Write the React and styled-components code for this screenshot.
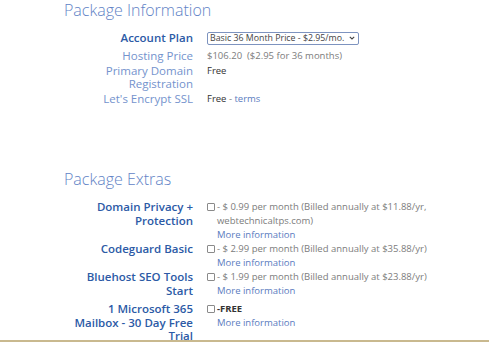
import React from 'react';
import styled, { createGlobalStyle } from 'styled-components';

const GlobalStyle = createGlobalStyle`
  html, body {
    margin: 0;
    padding: 0;
    background: #ffffff;
  }
  body {
    font-family: "Open Sans", "Noto Sans", Arial, sans-serif;
    overflow: hidden;
  }
`;

const Page = styled.div`
  width: 489px;
  height: 342px;
  display: flex;
  flex-direction: column;
  box-sizing: border-box;
  overflow: hidden;
  border-bottom: 2px solid #c9b98f;
`;

const Section = styled.section`
  display: flex;
  flex-direction: column;
  margin-top: ${(p) => p.$top || 0}px;
`;

const Heading = styled.h2`
  margin: 0 0 0 64px;
  font-size: 16px;
  line-height: 20px;
  font-weight: 300;
  color: #6283c6;
`;

const Grid = styled.div`
  display: grid;
  grid-template-columns: 129px 1fr;
  column-gap: 14px;
  row-gap: ${(p) => p.$gap || 0}px;
  padding-left: 64px;
  margin-top: ${(p) => p.$top || 0}px;
`;

const Label = styled.div`
  text-align: right;
  font-size: 11.5px;
  line-height: ${(p) => p.$lh || 13}px;
  font-weight: ${(p) => (p.$strong ? 600 : 400)};
  color: ${(p) => (p.$strong ? '#2c5aa6' : '#7493cd')};
  margin-top: ${(p) => p.$top || 0}px;
`;

const Value = styled.div`
  font-size: 9.5px;
  line-height: ${(p) => p.$lh || 13}px;
  color: #7c7c7c;
  margin-top: ${(p) => p.$top || 0}px;
  display: flex;
  flex-direction: column;
  justify-content: ${(p) => (p.$center ? 'center' : 'flex-start')};
`;

const Dark = styled.span`
  color: #333333;
  font-weight: ${(p) => (p.$bold ? 700 : 400)};
`;

const Link = styled.a`
  color: #5a7bc0;
  text-decoration: none;
`;

const Line = styled.div`
  display: flex;
  align-items: center;
  gap: 2px;
`;

const Indent = styled.div`
  padding-left: 10px;
`;

const Box = styled.span`
  display: inline-block;
  width: 6px;
  height: 6px;
  border: 1px solid #8a8a8a;
  border-radius: 1px;
  flex: none;
`;

const SelectBox = styled.div`
  display: flex;
  align-items: center;
  justify-content: space-between;
  gap: 2px;
  box-sizing: border-box;
  width: 152px;
  height: 13px;
  padding: 0 3px 0 2px;
  border: 1px solid #7d93bf;
  border-radius: 2px;
  font-size: 8.8px;
  line-height: 11px;
  color: #444444;
  white-space: nowrap;
  overflow: hidden;
`;

const Chevron = () => (
  <svg width="6" height="4" viewBox="0 0 6 4" style={{ flex: 'none' }}>
    <path d="M0.8 0.8 L3 3 L5.2 0.8" fill="none" stroke="#444" strokeWidth="1.1" />
  </svg>
);

const Extra = ({ price, extra, bold }) => (
  <>
    <Line>
      <Box />
      {bold ? <Dark $bold>-FREE</Dark> : <span>- {price}</span>}
    </Line>
    <Indent>
      {extra && <div>{extra}</div>}
      <Link href="#">More information</Link>
    </Indent>
  </>
);

export default function App() {
  return (
    <>
      <GlobalStyle />
      <Page>
        <Section>
          <Heading>Package Information</Heading>
          <Grid $top={9} $gap={2}>
            <Label $strong $lh={18}>Account Plan</Label>
            <Value $center>
              <SelectBox>
                <span>Basic 36 Month Price - $2.95/mo.</span>
                <Chevron />
              </SelectBox>
            </Value>
            <Label>Hosting Price</Label>
            <Value>$106.20&nbsp; ($2.95 for 36 months)</Value>
            <Label>Primary Domain Registration</Label>
            <Value><Dark>Free</Dark></Value>
            <Label>Let's Encrypt SSL</Label>
            <Value><span><Dark>Free</Dark> - <Link href="#">terms</Link></span></Value>
          </Grid>
        </Section>
        <Section $top={64}>
          <Heading>Package Extras</Heading>
          <Grid $top={11}>
            <Label $strong $lh={14}>Domain Privacy + Protection</Label>
            <Value $lh={14}>
              <Extra price="$ 0.99 per month (Billed annually at $11.88/yr," extra="webtechnicaltps.com)" />
            </Value>
            <Label $strong $lh={14}>Codeguard Basic</Label>
            <Value $lh={14}>
              <Extra price="$ 2.99 per month (Billed annually at $35.88/yr)" />
            </Value>
            <Label $strong $lh={14}>Bluehost SEO Tools Start</Label>
            <Value $lh={14}>
              <Extra price="$ 1.99 per month (Billed annually at $23.88/yr)" />
            </Value>
            <Label $strong $lh={13.5} $top={4}>1 Microsoft 365<br />Mailbox - 30 Day Free Trial</Label>
            <Value $lh={13.5} $top={4}>
              <Extra bold />
            </Value>
          </Grid>
        </Section>
      </Page>
    </>
  );
}
